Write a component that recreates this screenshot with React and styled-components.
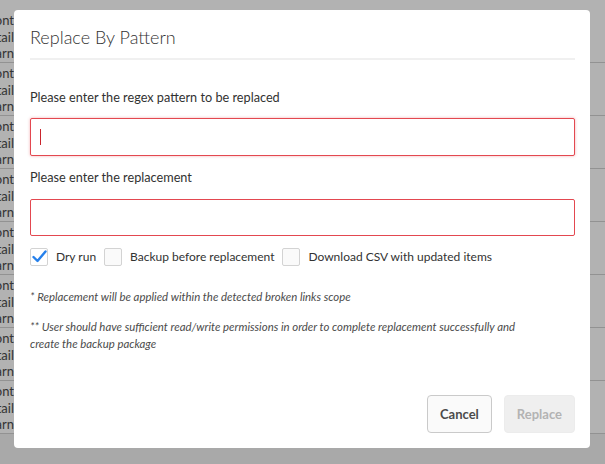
import styled, { createGlobalStyle } from 'styled-components';

const GlobalStyle = createGlobalStyle`
    html, body {
        margin: 0;
        padding: 0;
    }

    body {
        font-family: Lato, "Noto Sans", sans-serif;
        color: #4b4b4b;
    }
`;

const Page = styled.div`
    position: relative;
    height: 100vh;
    overflow: hidden;
    background-color: #f3f3f3;
`;

const Table = styled.div`
    background-color: #ffffff;
    padding-top: 10px;
`;

const Row = styled.div`
    display: flex;
    flex-direction: column;
    height: 50px;
    border-bottom: 1px solid #d2d2d2;
    padding-top: 2px;
`;

const Cell = styled.div`
    display: flex;
    justify-content: flex-end;
    width: 14px;
    overflow: hidden;
    font-size: 13px;
    line-height: 17px;
    color: #4b4b4b;
    white-space: nowrap;
`;

const Overlay = styled.div`
    position: absolute;
    inset: 0;
    display: flex;
    align-items: flex-start;
    padding: 10px 0 0 14px;
    background-color: rgba(0, 0, 0, 0.3);
`;

const Modal = styled.div`
    display: flex;
    flex-direction: column;
    width: 576px;
    height: 438px;
    box-sizing: border-box;
    padding: 0 15px 15px 16px;
    background-color: #ffffff;
    border-radius: 4px;
`;

const Header = styled.div`
    padding: 16px 0 10px;
    border-bottom: 2px solid #f0f0f0;
`;

const Title = styled.h2`
    margin: 0;
    font-size: 18px;
    font-weight: 300;
    line-height: 22px;
    color: #323232;
`;

const Label = styled.div`
    margin-top: ${(p) => p.$top}px;
    font-size: 12.7px;
    line-height: 18px;
    color: #323232;
`;

const Input = styled.div`
    position: relative;
    margin-top: ${(p) => p.$top}px;
    height: ${(p) => p.$height}px;
    box-sizing: border-box;
    border: 1px solid #e34850;
    border-radius: 2px;
    box-shadow: ${(p) => (p.$focused ? '0 0 3px rgba(227, 72, 80, 0.45)' : 'none')};
    background-color: #ffffff;
`;

const Caret = styled.span`
    position: absolute;
    left: 9px;
    top: 10px;
    width: 1px;
    height: 16px;
    background-color: #c9252d;
`;

const Options = styled.div`
    display: flex;
    align-items: center;
    margin-top: 12px;
    height: 17px;
`;

const Option = styled.label`
    display: flex;
    align-items: center;
    gap: 8px;
    margin-right: 8px;
    font-size: 12px;
    color: #323232;
`;

const Box = styled.span`
    display: flex;
    align-items: center;
    justify-content: center;
    width: 18px;
    height: 18px;
    box-sizing: border-box;
    border: 1px solid #d3d3d3;
    border-radius: 2px;
    background-color: ${(p) => (p.$checked ? '#ffffff' : '#fafafa')};
`;

const Note = styled.p`
    max-width: 500px;
    margin: ${(p) => p.$top}px 0 0;
    font-size: 11.4px;
    font-style: italic;
    line-height: 17px;
    color: #4b4b4b;
`;

const Footer = styled.div`
    display: flex;
    justify-content: flex-end;
    gap: 12px;
    margin-top: auto;
`;

const Button = styled.button`
    height: 38px;
    padding: 0 12px;
    font-family: inherit;
    font-size: 13px;
    font-weight: 700;
    border-radius: 4px;
    border: 1px solid ${(p) => (p.disabled ? '#ececec' : '#cacaca')};
    background-color: ${(p) => (p.disabled ? '#efefef' : '#fafafa')};
    color: ${(p) => (p.disabled ? '#b3b3b3' : '#4b4b4b')};
`;

const rows = Array.from({ length: 8 });

const Check = () => (
    <svg width="15" height="13" viewBox="0 0 15 13">
        <path d="M1.5 7 L5.5 11 L13.5 1.5" fill="none" stroke="#2680eb" strokeWidth="2.4" strokeLinecap="round" strokeLinejoin="round" />
    </svg>
);

const App = () => (
    <>
        <GlobalStyle />
        <Page>
            <Table>
                {rows.map((_, i) => (
                    <Row key={i}>
                        <Cell>Cont</Cell>
                        <Cell>Detail</Cell>
                        <Cell>Warn</Cell>
                    </Row>
                ))}
            </Table>
            <Overlay>
                <Modal>
                    <Header>
                        <Title>Replace By Pattern</Title>
                    </Header>
                    <Label $top={28}>Please enter the regex pattern to be replaced</Label>
                    <Input $top={12} $height={38} $focused>
                        <Caret />
                    </Input>
                    <Label $top={12}>Please enter the replacement</Label>
                    <Input $top={13} $height={37} />
                    <Options>
                        <Option>
                            <Box $checked><Check /></Box>
                            Dry run
                        </Option>
                        <Option>
                            <Box />
                            Backup before replacement
                        </Option>
                        <Option>
                            <Box />
                            Download CSV with updated items
                        </Option>
                    </Options>
                    <Note $top={23}>* Replacement will be applied within the detected broken links scope</Note>
                    <Note $top={13}>
                        ** User should have sufficient read/write permissions in order to complete replacement successfully and create the backup package
                    </Note>
                    <Footer>
                        <Button>Cancel</Button>
                        <Button disabled>Replace</Button>
                    </Footer>
                </Modal>
            </Overlay>
        </Page>
    </>
);

export default App;
